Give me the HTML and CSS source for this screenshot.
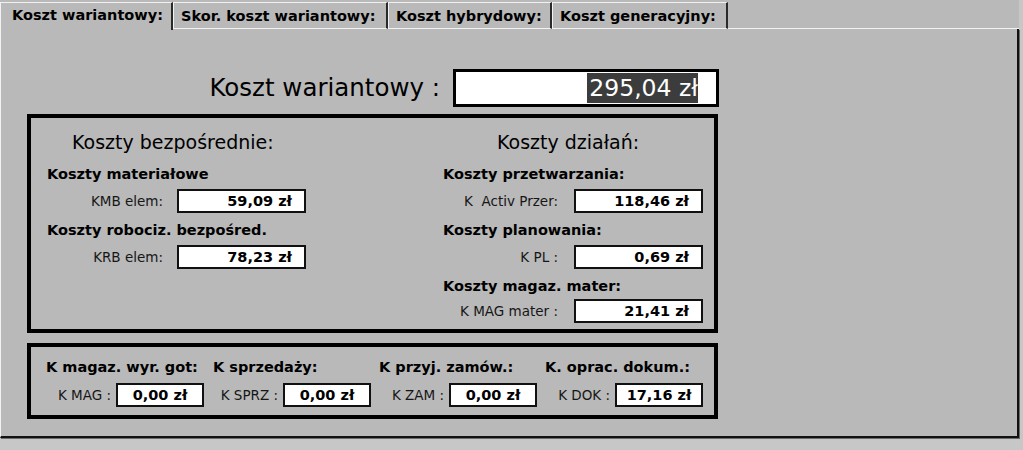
FILE: index.html
```html
<!DOCTYPE html>
<html lang="pl">
<head>
<meta charset="utf-8">
<title>Koszt wariantowy</title>
<link rel="stylesheet" href="styles.css">
</head>
<body>
<div class="window">
  <div class="tabs">
    <div class="tab active">Koszt wariantowy:</div>
    <div class="tab t1">Skor. koszt wariantowy:</div>
    <div class="tab t2">Koszt hybrydowy:</div>
    <div class="tab t3">Koszt generacyjny:</div>
    <div class="tab-fill"></div>
  </div>
  <div class="panel">
    <div class="title-row">
      <div class="title-label">Koszt wariantowy :</div>
      <div class="title-box"><span class="sel">295,04 zł</span></div>
    </div>
    <div class="main-box">
      <div class="col left">
        <div class="heading">Koszty bezpośrednie:</div>
        <div class="sub first">Koszty materiałowe</div>
        <div class="field"><span class="lbl">KMB elem:</span><span class="val">59,09 zł</span></div>
        <div class="sub">Koszty robociz. bezpośred.</div>
        <div class="field"><span class="lbl">KRB elem:</span><span class="val">78,23 zł</span></div>
      </div>
      <div class="col right">
        <div class="heading">Koszty działań:</div>
        <div class="sub first">Koszty przetwarzania:</div>
        <div class="field"><span class="lbl">K&nbsp; Activ Przer:</span><span class="val">118,46 zł</span></div>
        <div class="sub">Koszty planowania:</div>
        <div class="field"><span class="lbl">K PL :</span><span class="val">0,69 zł</span></div>
        <div class="sub">Koszty magaz. mater:</div>
        <div class="field last"><span class="lbl">K MAG mater :</span><span class="val">21,41 zł</span></div>
      </div>
    </div>
    <div class="bottom-box">
      <div class="grp">
        <div class="bsub">K magaz. wyr. got:</div>
        <div class="bfield"><span class="blbl">K MAG :</span><span class="bval">0,00 zł</span></div>
      </div>
      <div class="grp">
        <div class="bsub">K sprzedaży:</div>
        <div class="bfield"><span class="blbl">K SPRZ :</span><span class="bval">0,00 zł</span></div>
      </div>
      <div class="grp">
        <div class="bsub">K przyj. zamów.:</div>
        <div class="bfield"><span class="blbl">K ZAM :</span><span class="bval">0,00 zł</span></div>
      </div>
      <div class="grp">
        <div class="bsub">K. oprac. dokum.:</div>
        <div class="bfield"><span class="blbl">K DOK :</span><span class="bval">17,16 zł</span></div>
      </div>
    </div>
  </div>
</div>
</body>
</html>
```
FILE: styles.css
```css
* { box-sizing: border-box; }
html, body { margin: 0; padding: 0; }
body {
  background: #c7c7c7;
  font-family: "DejaVu Sans", Verdana, sans-serif;
  color: #000;
  width: 1023px;
  height: 450px;
  overflow: hidden;
}
.window {
  width: 1019px;
  height: 438px;
  display: flex;
  flex-direction: column;
  background: #b9b9b9;
}
.tabs {
  height: 29px;
  display: flex;
  background: #b9b9b9;
}
.tab {
  margin-top: 2px;
  height: 27px;
  border-top: 1px solid #f2f2f2;
  border-left: 1px solid #f2f2f2;
  border-right: 2px solid #2a2a2a;
  border-bottom: 1px solid #f2f2f2;
  font-weight: bold;
  font-size: 14.5px;
  line-height: 22px;
  padding-top: 2px;
  padding-left: 7px;
  white-space: nowrap;
  overflow: hidden;
}
.tab.active {
  width: 173px;
  height: 28px;
  border-bottom: none;
  padding-left: 11px;
  padding-top: 1px;
}
.tab.t1 { width: 215px; }
.tab.t2 { width: 164px; }
.tab.t3 { width: 176px; }
.tab-fill {
  flex: 1;
  border-bottom: 1px solid #f2f2f2;
}
.panel {
  flex: 1;
  border-left: 1px solid #f2f2f2;
  border-right: 2px solid #111;
  border-bottom: 2px solid #111;
  box-shadow: 1px 1px 0 #6a6a6a;
  padding-top: 40px;
}
.title-row {
  display: flex;
  align-items: center;
}
.title-label {
  width: 439px;
  text-align: right;
  font-size: 24.5px;
  line-height: 38px;
  margin-right: 13px;
  white-space: nowrap;
}
.title-box {
  width: 266px;
  height: 38px;
  border: 3px solid #000;
  background: #fff;
  display: flex;
  align-items: center;
  justify-content: flex-end;
  padding-right: 18px;
}
.sel {
  background: #3c3c3c;
  color: #fff;
  font-size: 23.5px;
  line-height: 30px;
  padding-left: 2px;
  white-space: nowrap;
}
.main-box {
  margin: 7px 0 0 26px;
  width: 691px;
  height: 219px;
  border: 4px solid #000;
  display: flex;
  padding-top: 12px;
}
.col { display: flex; flex-direction: column; }
.col.left { width: 412px; }
.col.right { flex: 1; }
.heading {
  font-size: 19px;
  line-height: 24px;
  height: 24px;
  white-space: nowrap;
}
.left .heading { padding-left: 41px; }
.right .heading { padding-left: 54px; }
.sub {
  font-weight: bold;
  font-size: 14.5px;
  line-height: 18px;
  height: 18px;
  margin-top: 8px;
  white-space: nowrap;
}
.sub.first { margin-top: 11px; }
.left .sub { padding-left: 16px; }
.field {
  display: flex;
  align-items: center;
  margin-top: 6px;
  height: 24px;
}
.field.last { margin-top: 4px; }
.lbl {
  font-size: 13.5px;
  line-height: 24px;
  text-align: right;
  color: #161616;
  white-space: nowrap;
}
.left .lbl { width: 132px; margin-right: 14px; }
.right .lbl { width: 115px; margin-right: 16px; }
.val {
  width: 129px;
  height: 24px;
  border: 2px solid #111;
  background: #fff;
  font-weight: bold;
  font-size: 14.5px;
  line-height: 20px;
  text-align: right;
  padding-right: 12px;
  white-space: nowrap;
}
.bottom-box {
  margin: 10px 0 0 26px;
  width: 691px;
  height: 76px;
  border: 4px solid #000;
  display: flex;
  padding: 11px 0 0 15px;
}
.grp { width: 166px; display: flex; flex-direction: column; }
.grp:first-child { width: 167px; }
.bsub {
  font-weight: bold;
  font-size: 14.5px;
  line-height: 18px;
  height: 18px;
  white-space: nowrap;
}
.bfield {
  display: flex;
  align-items: center;
  margin-top: 7px;
  height: 24px;
}
.blbl {
  width: 65px;
  margin-right: 5px;
  text-align: right;
  font-size: 13.5px;
  line-height: 24px;
  color: #161616;
  white-space: nowrap;
}
.bval {
  width: 88px;
  height: 24px;
  border: 2px solid #111;
  background: #fff;
  font-weight: bold;
  font-size: 14.5px;
  line-height: 20px;
  text-align: center;
  white-space: nowrap;
}
```
